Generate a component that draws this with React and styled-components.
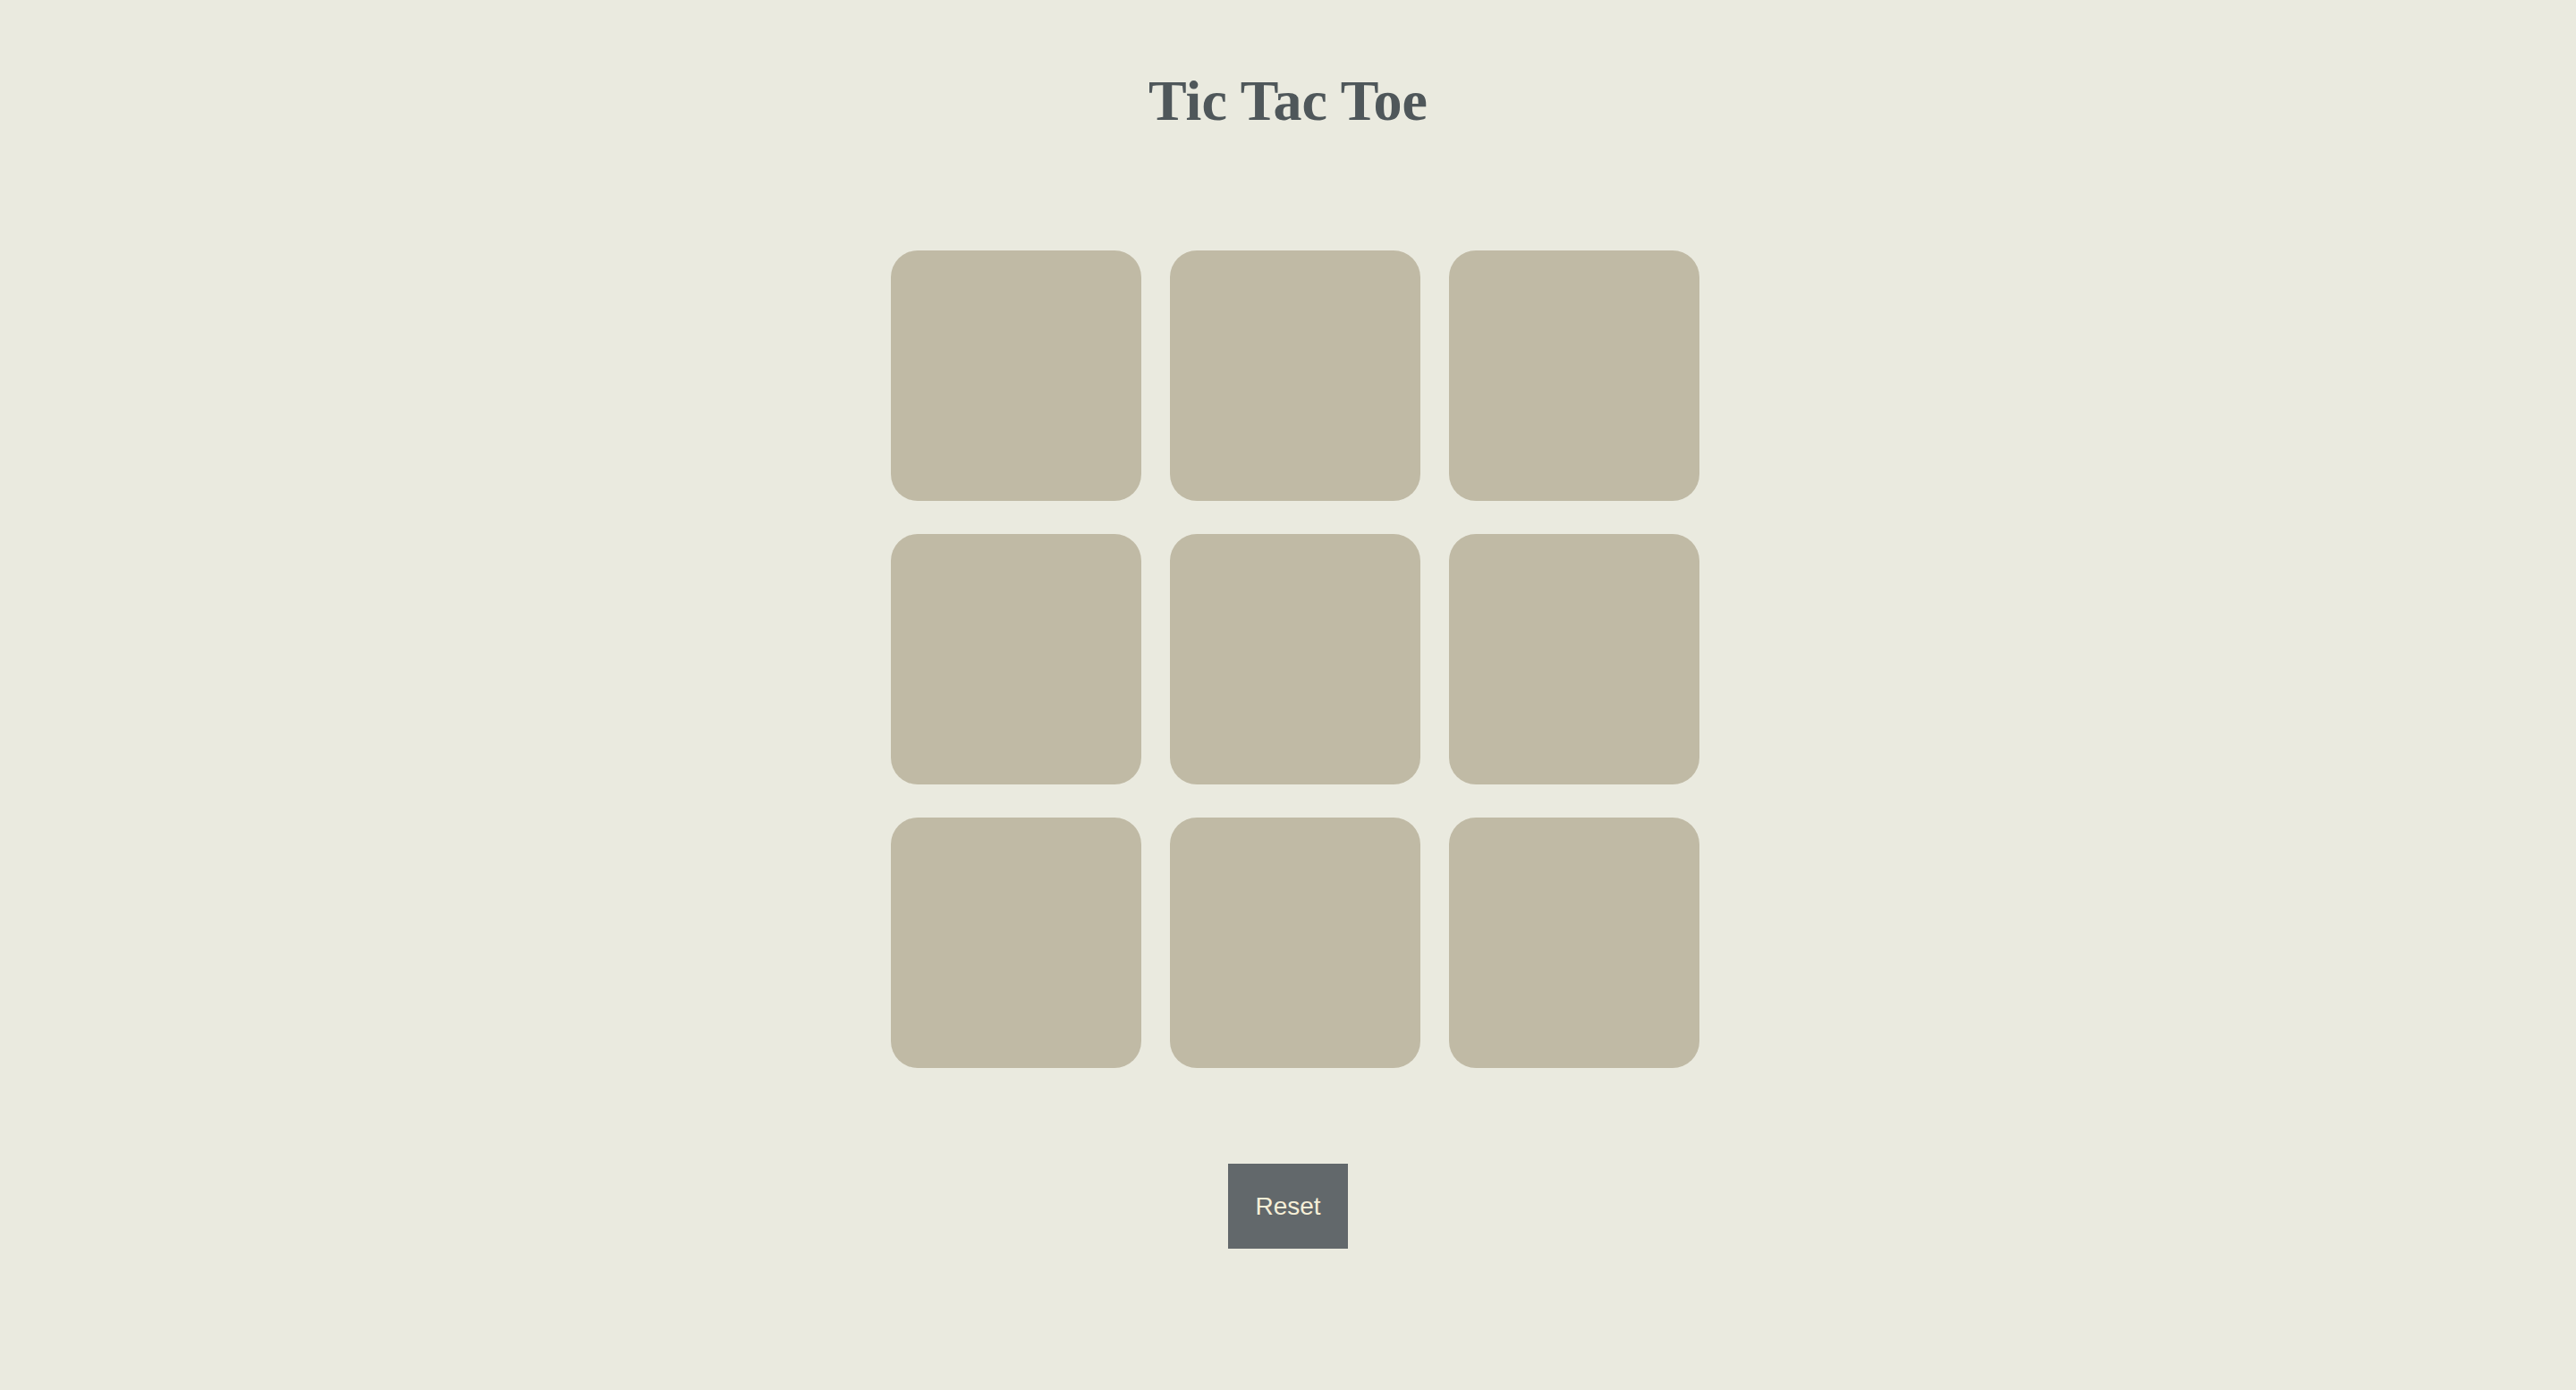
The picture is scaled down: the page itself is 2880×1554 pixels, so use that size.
import styled, { createGlobalStyle } from 'styled-components';

const GlobalStyle = createGlobalStyle`
  html, body {
    margin: 0;
    padding: 0;
    background: #eaeadf;
  }
`;

const Page = styled.div`
  display: flex;
  flex-direction: column;
  align-items: center;
  min-height: 100vh;
  background: #eaeadf;
`;

const Title = styled.h1`
  margin: 81px 0 0;
  font-family: "Liberation Serif", "Times New Roman", serif;
  font-weight: 700;
  font-size: 64px;
  line-height: 64px;
  color: #4f575a;
`;

const Board = styled.div`
  display: grid;
  grid-template-columns: repeat(3, 280px);
  grid-auto-rows: 280px;
  column-gap: 32px;
  row-gap: 37px;
  margin: 135px 0 0 16px;
`;

const Cell = styled.div`
  background: #c0baa5;
  border-radius: 30px;
`;

const ResetButton = styled.button`
  margin-top: 107px;
  width: 134px;
  height: 95px;
  border: none;
  background: #62686b;
  color: #f5efd7;
  font-family: "Liberation Sans", Arial, sans-serif;
  font-size: 28px;
  cursor: pointer;
`;

export default function App() {
  const cells = Array.from({ length: 9 });
  return (
    <Page>
      <GlobalStyle />
      <Title>Tic Tac Toe</Title>
      <Board>
        {cells.map((_, i) => (
          <Cell key={i} />
        ))}
      </Board>
      <ResetButton>Reset</ResetButton>
    </Page>
  );
}
